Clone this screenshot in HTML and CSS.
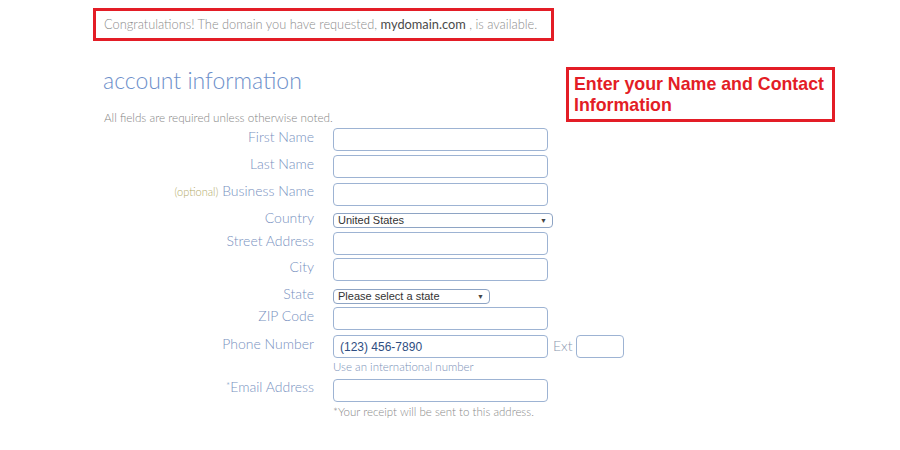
FILE: index.html
```html
<!DOCTYPE html>
<html>
<head>
<meta charset="utf-8">
<link rel="stylesheet" href="styles.css">
</head>
<body>
<div class="page">
  <div class="notice">Congratulations! The domain you have requested, <b>mydomain.com</b> , is available.</div>
  <h1 class="title">account information</h1>
  <p class="note">All fields are required unless otherwise noted.</p>
  <form class="form">
    <div class="row r-first"><label class="label">First Name</label><input class="field" type="text"></div>
    <div class="row r-gap4"><label class="label">Last Name</label><input class="field" type="text"></div>
    <div class="row r-gap4"><label class="label"><span class="opt">(optional)</span> Business Name</label><input class="field" type="text"></div>
    <div class="row sel-row r-gap7"><label class="label">Country</label><div class="select country"><span class="sel-text">United States</span><span class="arrow">▼</span></div></div>
    <div class="row r-gap4"><label class="label">Street Address</label><input class="field" type="text"></div>
    <div class="row r-gap3"><label class="label">City</label><input class="field" type="text"></div>
    <div class="row sel-row r-gap8"><label class="label">State</label><div class="select state"><span class="sel-text">Please select a state</span><span class="arrow">▼</span></div></div>
    <div class="row r-gap3"><label class="label">ZIP Code</label><input class="field" type="text"></div>
    <div class="row r-gap5"><label class="label">Phone Number</label><input class="field phone" type="text" value="(123) 456-7890"><span class="ext-label">Ext</span><input class="field ext" type="text"></div>
    <div class="hint hint-phone">Use an international number</div>
    <div class="row r-gap4"><label class="label"><span class="star">*</span>Email Address</label><input class="field" type="text"></div>
    <div class="hint hint-email">*Your receipt will be sent to this address.</div>
  </form>
  <div class="callout">Enter your Name and Contact Information</div>
</div>
</body>
</html>
```

FILE: styles.css
```css
* { box-sizing: border-box; }
html, body { margin: 0; padding: 0; background: #ffffff; }
body { font-family: "Lato", "Open Sans", sans-serif; font-weight: 300; }

.page {
  position: relative;
  width: 900px;
  height: 450px;
  padding: 8px 0 0 93px;
}

.notice {
  width: 461px;
  height: 33px;
  border: 3px solid #e31d26;
  padding-left: 8px;
  font-size: 12.8px;
  line-height: 26px;
  color: #8c8c8c;
  font-weight: 300;
  white-space: nowrap;
}
.notice b { color: #4a4a4a; font-weight: 400; }

.title {
  margin: 25px 0 0 10px;
  font-size: 23px;
  line-height: 28px;
  font-weight: 300;
  color: #6d8fca;
}

.note {
  margin: 16px 0 0 11px;
  font-size: 11.7px;
  line-height: 14px;
  color: #858585;
  font-weight: 300;
}

.form { margin: 4px 0 0 11px; }

.row {
  display: flex;
  align-items: center;
}
.r-first { margin-top: 0; }
.r-gap3 { margin-top: 3px; }
.r-gap4 { margin-top: 4px; }
.r-gap5 { margin-top: 5px; }
.r-gap7 { margin-top: 7px; }
.r-gap8 { margin-top: 8px; }

.label {
  width: 210px;
  margin-right: 19px;
  text-align: right;
  font-size: 14px;
  line-height: 18px;
  color: #7891c0;
  padding-bottom: 5px;
  white-space: nowrap;
}
.sel-row .label { line-height: 15px; padding-bottom: 3px; margin-top: -3px; }

.opt { font-size: 11px; color: #b3ab6a; }
.star { font-size: 10px; position: relative; top: -3px; }

.field {
  width: 215px;
  height: 23px;
  border: 1px solid #9db3d3;
  border-radius: 4px;
  background: #fff;
  padding: 0 6px;
  font-family: "Liberation Sans", Arial, sans-serif;
  font-size: 12px;
  color: #2f4e82;
  outline: none;
}

.ext-label {
  margin-left: 5px;
  font-size: 14px;
  color: #8a98b0;
  padding-bottom: 3px;
}
.field.ext { width: 48px; margin-left: 4px; }

.select {
  position: relative;
  height: 15px;
  border: 1px solid #8ea4c4;
  border-radius: 4px;
  background: #fff;
  font-family: "Liberation Sans", Arial, sans-serif;
  font-size: 11px;
  line-height: 13px;
  color: #333;
  padding-left: 4px;
}
.country { width: 220px; }
.state { width: 157px; }
.arrow {
  position: absolute;
  right: 5px;
  top: 0;
  font-size: 7px;
  line-height: 13px;
  color: #444;
}

.hint {
  margin: 2px 0 0 229px;
  font-size: 11.5px;
  line-height: 14px;
  color: #8a8a8a;
  font-weight: 300;
}
.hint-phone { color: #7b92b8; }
.hint-email { margin-top: 3px; }

.callout {
  position: absolute;
  left: 566px;
  top: 67px;
  width: 269px;
  height: 55px;
  border: 3px solid #e31d26;
  padding: 4px 0 0 5px;
  font-family: "Liberation Sans", Arial, sans-serif;
  font-weight: 700;
  font-size: 17.8px;
  line-height: 21px;
  color: #e31d26;
}
```
